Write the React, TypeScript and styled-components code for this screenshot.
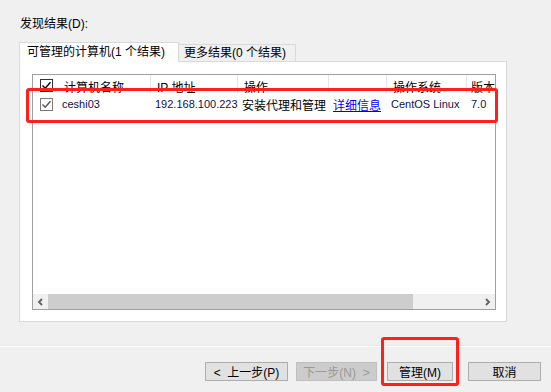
import styled, { createGlobalStyle } from "styled-components";

const GlobalStyle = createGlobalStyle`
  html, body {
    margin: 0;
    padding: 0;
    background: #f0f0f0;
  }
`;

const Dialog = styled.div`
  width: 551px;
  height: 392px;
  background: #f0f0f0;
  display: flex;
  flex-direction: column;
  font-family: "Liberation Sans", "Noto Sans CJK SC", sans-serif;
  font-size: 12px;
  color: #000;
  overflow: hidden;
`;

const Label = styled.div`
  margin: 16px 0 0 20px;
  height: 16px;
  line-height: 16px;
`;

const TabStrip = styled.div`
  display: flex;
  align-items: flex-end;
  margin: 10px 0 0 19px;
  height: 20px;
  position: relative;
  z-index: 1;
`;

const Tab = styled.div<{ $active?: boolean; $width: number }>`
  box-sizing: border-box;
  width: ${(p) => p.$width}px;
  height: ${(p) => (p.$active ? "20px" : "17px")};
  margin-bottom: ${(p) => (p.$active ? "0" : "1px")};
  margin-left: ${(p) => (p.$active ? "0" : "-1px")};
  padding-left: ${(p) => (p.$active ? "7px" : "5px")};
  background: ${(p) => (p.$active ? "#fff" : "#f0f0f0")};
  border: 1px solid #d9d9d9;
  border-bottom: none;
  line-height: ${(p) => (p.$active ? "18px" : "16px")};
  white-space: nowrap;
`;

const Panel = styled.div`
  box-sizing: border-box;
  width: 488px;
  height: 261px;
  margin: -1px 0 0 19px;
  background: #fff;
  border: 1px solid #d9d9d9;
  padding: 12px 10px 11px 12px;
  display: flex;
`;

const ListView = styled.div`
  flex: 1;
  border: 1px solid #a0a0a0;
  display: flex;
  flex-direction: column;
  background: #fff;
`;

const columns = "25px 93px 87px 91px 58px 80px 1fr";

const HeaderRow = styled.div`
  display: grid;
  grid-template-columns: ${columns};
  height: 18px;
`;

const HeaderCell = styled.div`
  border-right: 1px solid #e5e5e5;
  padding: 4px 0 0 6px;
  white-space: nowrap;
  overflow: hidden;
  display: flex;
  align-items: center;
  &:last-child {
    border-right: none;
    padding-left: 4px;
  }
`;

const ItemRow = styled.div`
  position: relative;
  display: grid;
  grid-template-columns: ${columns};
  height: 20px;
`;

const Cell = styled.div<{ $latin?: boolean }>`
  padding-left: 4px;
  display: flex;
  align-items: center;
  white-space: nowrap;
  overflow: hidden;
  font-size: ${(p) => (p.$latin ? "11px" : "12px")};
  color: ${(p) => (p.$latin ? "#10104a" : "#000")};
  padding-top: 2px;
`;

const BoxCell = styled.div`
  padding-left: 7px;
  display: flex;
  align-items: center;
`;

const Link = styled.span`
  color: #0000ff;
  text-decoration: underline;
`;

const CheckBox = styled.span<{ $dim?: boolean }>`
  box-sizing: border-box;
  width: 13px;
  height: 13px;
  border: 1px solid ${(p) => (p.$dim ? "#7a7a7a" : "#333")};
  background: #fff;
  display: flex;
  align-items: center;
  justify-content: center;
  margin-top: 3px;
  svg {
    display: block;
  }
`;

const Highlight = styled.div<{ $top: number; $right: number; $bottom: number; $left: number }>`
  position: absolute;
  top: ${(p) => p.$top}px;
  right: ${(p) => p.$right}px;
  bottom: ${(p) => p.$bottom}px;
  left: ${(p) => p.$left}px;
  border: 3px solid #ff2119;
  border-radius: 3px;
  pointer-events: none;
  z-index: 5;
`;

const Spacer = styled.div`
  flex: 1;
`;

const ScrollBar = styled.div`
  height: 15px;
  display: flex;
  background: #f0f0f0;
`;

const ScrollArrow = styled.div`
  width: 15px;
  display: flex;
  align-items: center;
  justify-content: center;
`;

const ScrollThumb = styled.div`
  width: 365px;
  background: #cdcdcd;
`;

const ScrollTrack = styled.div`
  flex: 1;
`;

const Separator = styled.div`
  margin-top: 23px;
  height: 1px;
  background: #fff;
  border-top: 1px solid #e6e6e6;
`;

const ButtonRow = styled.div`
  display: flex;
  margin: 15px 0 0 205px;
`;

const Button = styled.div<{ $width: number; $gap: number; $disabled?: boolean }>`
  position: relative;
  box-sizing: border-box;
  width: ${(p) => p.$width}px;
  height: 19px;
  margin-right: ${(p) => p.$gap}px;
  border: 1px solid ${(p) => (p.$disabled ? "#bfbfbf" : "#adadad")};
  background: ${(p) => (p.$disabled ? "#cccccc" : "#e1e1e1")};
  color: ${(p) => (p.$disabled ? "#9a9a9a" : "#000")};
  display: flex;
  align-items: center;
  justify-content: center;
  font-size: 12px;
  white-space: pre;
`;

function Check({ color }: { color: string }) {
  return (
    <svg width="11" height="11" viewBox="0 0 11 11">
      <path d="M1.5 5.5 L4.2 8.2 L9.5 2.2" fill="none" stroke={color} strokeWidth="1.4" />
    </svg>
  );
}

function Chevron({ dir }: { dir: "left" | "right" }) {
  const d = dir === "left" ? "M6 2 L3 5 L6 8" : "M3 2 L6 5 L3 8";
  return (
    <svg width="9" height="10" viewBox="0 0 9 10">
      <path d={d} fill="none" stroke="#606060" strokeWidth="1.8" />
    </svg>
  );
}

export default function App() {
  return (
    <Dialog>
      <GlobalStyle />
      <Label>发现结果(D):</Label>
      <TabStrip>
        <Tab $active $width={160}>可管理的计算机(1 个结果)</Tab>
        <Tab $width={118}>更多结果(0 个结果)</Tab>
      </TabStrip>
      <Panel>
        <ListView>
          <HeaderRow>
            <BoxCell>
              <CheckBox>
                <Check color="#000" />
              </CheckBox>
            </BoxCell>
            <HeaderCell>计算机名称</HeaderCell>
            <HeaderCell>IP 地址</HeaderCell>
            <HeaderCell>操作</HeaderCell>
            <HeaderCell></HeaderCell>
            <HeaderCell>操作系统</HeaderCell>
            <HeaderCell>版本</HeaderCell>
          </HeaderRow>
          <ItemRow>
            <BoxCell>
              <CheckBox $dim>
                <Check color="#555" />
              </CheckBox>
            </BoxCell>
            <Cell $latin>ceshi03</Cell>
            <Cell $latin>192.168.100.223</Cell>
            <Cell>安装代理和管理</Cell>
            <Cell>
              <Link>详细信息</Link>
            </Cell>
            <Cell $latin>CentOS Linux</Cell>
            <Cell $latin>7.0</Cell>
            <Highlight $top={-5} $right={-3} $bottom={-10} $left={-7} />
          </ItemRow>
          <Spacer />
          <ScrollBar>
            <ScrollArrow>
              <Chevron dir="left" />
            </ScrollArrow>
            <ScrollThumb />
            <ScrollTrack />
            <ScrollArrow>
              <Chevron dir="right" />
            </ScrollArrow>
          </ScrollBar>
        </ListView>
      </Panel>
      <Separator />
      <ButtonRow>
        <Button $width={83} $gap={8}>{"<  上一步(P)"}</Button>
        <Button $width={81} $gap={10} $disabled>{"下一步(N)  >"}</Button>
        <Button $width={66} $gap={15}>
          管理(M)
          <Highlight $top={-26} $right={-7} $bottom={-6} $left={-7} />
        </Button>
        <Button $width={73} $gap={0}>取消</Button>
      </ButtonRow>
    </Dialog>
  );
}
